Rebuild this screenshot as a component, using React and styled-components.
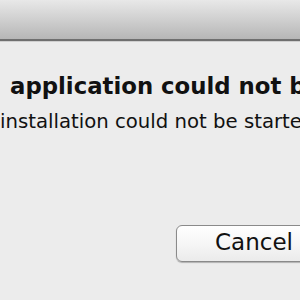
import styled, { createGlobalStyle } from 'styled-components';

const GlobalStyle = createGlobalStyle`
  html, body {
    margin: 0;
    padding: 0;
    background: #ececec;
    overflow: hidden;
  }
`;

function App() {
  return (
    <>
      <GlobalStyle />
      <Dialog>
        <TitleBar />
        <Body>
          <Heading>application could not be opened.</Heading>
          <Message>installation could not be started.</Message>
          <ButtonRow>
            <Button>Cancel</Button>
          </ButtonRow>
        </Body>
      </Dialog>
    </>
  );
}

export default App;

const Dialog = styled.div`
  width: 300px;
  height: 300px;
  overflow: hidden;
  background: #ececec;
  font-family: 'DejaVu Sans', 'Liberation Sans', sans-serif;
  color: #111;
`;

const TitleBar = styled.div`
  height: 39px;
  background: linear-gradient(to bottom, #e8e8e8 0%, #d2d2d2 45%, #b6b6b6 100%);
  border-bottom: 2px solid #6f6f6f;
  box-shadow: 0 1px 0 #cfcfcf;
`;

const Body = styled.div`
  display: flex;
  flex-direction: column;
`;

const Heading = styled.div`
  margin-top: 32px;
  padding-left: 10px;
  font-size: 22.8px;
  font-weight: bold;
  line-height: 26px;
  white-space: nowrap;
`;

const Message = styled.div`
  margin-top: 12px;
  font-size: 19.7px;
  line-height: 22px;
  white-space: nowrap;
`;

const ButtonRow = styled.div`
  display: flex;
  padding-left: 176px;
  margin-top: 92px;
`;

const Button = styled.div`
  flex: none;
  width: 160px;
  height: 37px;
  box-sizing: border-box;
  padding-left: 38px;
  border: 1px solid #8a8a8a;
  border-radius: 6px;
  background: linear-gradient(to bottom, #ffffff 0%, #f6f6f6 50%, #ebebeb 100%);
  box-shadow: 0 1px 1px rgba(0, 0, 0, 0.25);
  font-size: 23px;
  line-height: 33px;
  white-space: nowrap;
`;
